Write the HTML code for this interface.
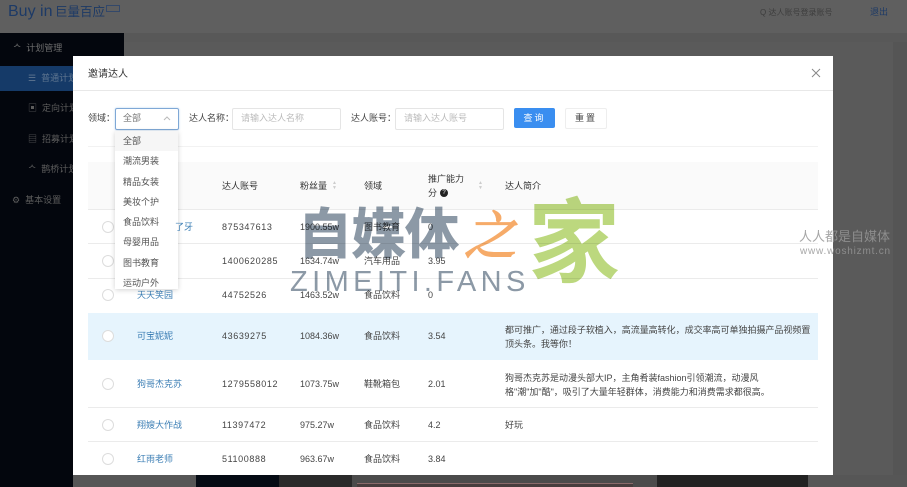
<!DOCTYPE html>
<html lang="zh"><head><meta charset="utf-8"><style>
html,body{margin:0;padding:0}
body{width:907px;height:487px;overflow:hidden;position:relative;background:#585858;font-family:"Liberation Sans","Noto Sans CJK SC",sans-serif;font-size:9px;color:#444}
.a{position:absolute;white-space:nowrap}
.hline{position:absolute;height:1px;background:#ebebeb;left:88px;width:730px}
.radio{position:absolute;left:102px;width:10px;height:10px;border:1px solid #ddd;border-radius:50%;background:#fff}
.link{color:#3d7fb5}
.wm{position:absolute;white-space:nowrap;line-height:1}
.m{mix-blend-mode:multiply}
.d{letter-spacing:.6px}
</style></head><body>
<div class="a" style="left:0;top:0;width:907px;height:33px;background:#5f5f5f"></div>
<div class="a" style="left:8px;top:2px;font-size:16px;line-height:20px;color:#1d3a66">Buy in</div>
<div class="a" style="left:55px;top:2px;font-size:12.5px;line-height:20px;color:#1d3a66">巨量百应</div>
<div class="a" style="left:106px;top:5px;width:12px;height:5px;border:1px solid #33486a"></div>
<div class="a" style="left:760px;top:7px;font-size:8px;line-height:12px;color:#3d3d3d">Q 达人账号登录账号</div>
<div class="a" style="left:870px;top:6px;font-size:9px;line-height:13px;color:#1d3a66">退出</div>
<div class="a" style="left:0;top:33px;width:124px;height:454px;background:#03060d"></div>
<div class="a" style="left:0;top:66px;width:124px;height:25px;background:#153a68"></div>
<div class="a" style="left:13px;top:42px;font-size:9px;line-height:13px;color:#6e6e6e">ᄉ&nbsp;&nbsp;计划管理</div>
<div class="a" style="left:28px;top:72px;font-size:9px;line-height:13px;color:#5f7690">☰&nbsp; 普通计划</div>
<div class="a" style="left:28px;top:102px;font-size:9px;line-height:13px;color:#5c5c5c">▣&nbsp; 定向计划</div>
<div class="a" style="left:28px;top:133px;font-size:9px;line-height:13px;color:#5c5c5c">▤&nbsp; 招募计划</div>
<div class="a" style="left:28px;top:163px;font-size:9px;line-height:13px;color:#5c5c5c">ᄉ&nbsp; 鹊桥计划</div>
<div class="a" style="left:12px;top:194px;font-size:9px;line-height:13px;color:#5c5c5c">⚙&nbsp;&nbsp;基本设置</div>

<div class="a" style="left:124px;top:42px;width:783px;height:445px;background:#5a5a5a"></div>
<div class="a" style="left:893px;top:42px;width:14px;height:445px;background:#555"></div>
<div class="a" style="left:73px;top:475px;width:834px;height:12px;background:#565656"></div>
<div class="a" style="left:196px;top:475px;width:83px;height:12px;background:#050b14"></div>
<div class="a" style="left:279px;top:475px;width:73px;height:12px;background:#2a2a2a"></div>
<div class="a" style="left:352px;top:475px;width:305px;height:12px;background:#4b4b4b"></div>
<div class="a" style="left:357px;top:483px;width:276px;height:4px;background:#473d3d;border-top:1px solid #8a6a6a;box-sizing:border-box"></div>
<div class="a" style="left:657px;top:475px;width:151px;height:12px;background:#222"></div>

<div class="a" style="left:73px;top:56px;width:760px;height:419px;background:#fff;overflow:hidden"></div>
<div class="a" style="left:88px;top:67px;font-size:10px;line-height:15px;color:#333">邀请达人</div>
<svg class="a" style="left:811px;top:68px" width="10" height="10" viewBox="0 0 10 10"><path d="M1 1L9 9M9 1L1 9" stroke="#888" stroke-width="1" fill="none"/></svg>
<div class="a" style="left:73px;top:90px;width:760px;height:1px;background:#e8e8e8"></div>

<div class="a" style="left:88px;top:112px;line-height:13px;color:#444">领域：</div>
<div class="a" style="left:115px;top:108px;width:62px;height:20px;border:1px solid #7fa8d6;border-radius:2px;box-shadow:0 0 2px #bcd5f0"></div>
<div class="a" style="left:123px;top:112px;line-height:13px;color:#777">全部</div>
<svg class="a" style="left:163px;top:116px" width="8" height="5" viewBox="0 0 8 5"><path d="M1 4L4 1L7 4" stroke="#bbb" fill="none"/></svg>
<div class="a" style="left:189px;top:112px;line-height:13px;color:#444">达人名称：</div>
<div class="a" style="left:232px;top:108px;width:107px;height:20px;border:1px solid #e5e5e5;border-radius:2px"></div>
<div class="a" style="left:241px;top:112px;line-height:13px;color:#bbb">请输入达人名称</div>
<div class="a" style="left:351px;top:112px;line-height:13px;color:#444">达人账号：</div>
<div class="a" style="left:395px;top:108px;width:107px;height:20px;border:1px solid #e5e5e5;border-radius:2px"></div>
<div class="a" style="left:404px;top:112px;line-height:13px;color:#bbb">请输入达人账号</div>
<div class="a" style="left:514px;top:108px;width:41px;height:20px;background:#3a8ef0;border-radius:2px;color:#fff;text-align:center;line-height:20px;letter-spacing:2px">查询</div>
<div class="a" style="left:565px;top:108px;width:40px;height:19px;border:1px solid #eee;border-radius:2px;color:#444;text-align:center;line-height:19px;letter-spacing:2px">重置</div>
<div class="hline" style="top:146px;background:#f2f2f2"></div>

<div class="a" style="left:88px;top:162px;width:730px;height:47px;background:#fafafa"></div>
<div class="hline" style="top:209px"></div>
<div class="hline" style="top:243px"></div>
<div class="hline" style="top:278px"></div>
<div class="a" style="left:88px;top:313px;width:730px;height:47px;background:#e6f4fd"></div>
<div class="hline" style="top:407px"></div>
<div class="hline" style="top:441px"></div>

<div class="a" style="left:222px;top:180px;line-height:13px;color:#333">达人账号</div>
<div class="a" style="left:300px;top:180px;line-height:13px;color:#333">粉丝量</div>
<div class="a" style="left:332px;top:181px;font-size:5px;line-height:5px;color:#ccc;white-space:pre">▲
▼</div>
<div class="a" style="left:364px;top:180px;line-height:13px;color:#333">领域</div>
<div class="a" style="left:428px;top:172px;line-height:14px;color:#333;white-space:pre">推广能力
分</div>
<div class="a" style="left:440px;top:189px;width:8px;height:8px;border-radius:50%;background:#222;color:#fff;font-size:6px;line-height:8px;text-align:center">?</div>
<div class="a" style="left:478px;top:181px;font-size:5px;line-height:5px;color:#ccc;white-space:pre">▲
▼</div>
<div class="a" style="left:505px;top:180px;line-height:13px;color:#333">达人简介</div>

<div class="radio" style="top:221px"></div>
<div class="a d" style="left:222px;top:221px;line-height:13px">875347613</div>
<div class="a" style="left:300px;top:221px;line-height:13px">1900.55w</div>
<div class="a" style="left:364px;top:221px;line-height:13px">图书教育</div>
<div class="a" style="left:428px;top:221px;line-height:13px">0</div>

<div class="radio" style="top:255px"></div>
<div class="a d" style="left:222px;top:255px;line-height:13px">1400620285</div>
<div class="a" style="left:300px;top:255px;line-height:13px">1634.74w</div>
<div class="a" style="left:364px;top:255px;line-height:13px">汽车用品</div>
<div class="a" style="left:428px;top:255px;line-height:13px">3.95</div>

<div class="radio" style="top:289px"></div>
<div class="a link" style="left:137px;top:289px;line-height:13px">天天笑园</div>
<div class="a d" style="left:222px;top:289px;line-height:13px">44752526</div>
<div class="a" style="left:300px;top:289px;line-height:13px">1463.52w</div>
<div class="a" style="left:364px;top:289px;line-height:13px">食品饮料</div>
<div class="a" style="left:428px;top:289px;line-height:13px">0</div>

<div class="radio" style="top:330px"></div>
<div class="a link" style="left:137px;top:330px;line-height:13px">可宝妮妮</div>
<div class="a d" style="left:222px;top:330px;line-height:13px">43639275</div>
<div class="a" style="left:300px;top:330px;line-height:13px">1084.36w</div>
<div class="a" style="left:364px;top:330px;line-height:13px">食品饮料</div>
<div class="a" style="left:428px;top:330px;line-height:13px">3.54</div>
<div class="a" style="left:505px;top:323px;line-height:14px;white-space:pre;letter-spacing:-.02px">都可推广，通过段子软植入，高流量高转化，成交率高可单独拍摄产品视频置
顶头条。我等你！</div>

<div class="radio" style="top:378px"></div>
<div class="a link" style="left:137px;top:378px;line-height:13px">狗哥杰克苏</div>
<div class="a d" style="left:222px;top:378px;line-height:13px">1279558012</div>
<div class="a" style="left:300px;top:378px;line-height:13px">1073.75w</div>
<div class="a" style="left:364px;top:378px;line-height:13px">鞋靴箱包</div>
<div class="a" style="left:428px;top:378px;line-height:13px">2.01</div>
<div class="a" style="left:505px;top:371px;line-height:14px;white-space:pre">狗哥杰克苏是动漫头部大IP，主角肴装fashion引领潮流，动漫风
格"潮"加"酷"，吸引了大量年轻群体，消费能力和消费需求都很高。</div>

<div class="radio" style="top:419px"></div>
<div class="a link" style="left:137px;top:419px;line-height:13px">翔嫂大作战</div>
<div class="a d" style="left:222px;top:419px;line-height:13px">11397472</div>
<div class="a" style="left:300px;top:419px;line-height:13px">975.27w</div>
<div class="a" style="left:364px;top:419px;line-height:13px">食品饮料</div>
<div class="a" style="left:428px;top:419px;line-height:13px">4.2</div>
<div class="a" style="left:505px;top:419px;line-height:13px">好玩</div>

<div class="radio" style="top:453px"></div>
<div class="a link" style="left:137px;top:453px;line-height:13px">红雨老师</div>
<div class="a d" style="left:222px;top:453px;line-height:13px">51100888</div>
<div class="a" style="left:300px;top:453px;line-height:13px">963.67w</div>
<div class="a" style="left:364px;top:453px;line-height:13px">食品饮料</div>
<div class="a" style="left:428px;top:453px;line-height:13px">3.84</div>

<div class="a" style="left:115px;top:131px;width:63px;height:158px;background:#fff;box-shadow:0 1px 5px rgba(0,0,0,.18);overflow:hidden">
<div style="height:20px;background:#f6f6f6"></div>
</div>
<div class="a link" style="left:175px;top:221px;line-height:13px;font-size:9px">了牙</div>
<div class="a" style="left:123px;top:131px;line-height:20.3px;white-space:pre;color:#555">全部
潮流男装
精品女装
美妆个护
食品饮料
母婴用品
图书教育
运动户外</div>

<div class="wm m" style="left:298px;top:203px;font-size:54px;font-weight:700;color:#8c99a6;font-family:'Noto Sans CJK SC',sans-serif;letter-spacing:-.5px;-webkit-text-stroke:1px #8c99a6">自媒体</div>
<div class="wm m" style="left:464px;top:206px;font-size:52px;color:#f6ab69;font-family:'Noto Serif CJK SC',serif;font-style:italic;-webkit-text-stroke:1.5px #f6ab69">之</div>
<div class="wm m" style="left:528px;top:190px;font-size:92px;font-weight:700;color:#bcd87e;font-family:'WenQuanYi Zen Hei','Noto Sans CJK SC',sans-serif">家</div>
<div class="wm m" style="left:290px;top:268px;font-size:29px;color:#8c99a6;letter-spacing:4.4px">ZIMEITI.FANS</div>
<div class="wm" style="left:799px;top:230px;font-size:13px;color:rgba(150,150,150,.85)">人人都是自媒体</div>
<div class="wm" style="left:800px;top:247px;font-size:10px;color:rgba(150,150,150,.85);letter-spacing:.8px">www.woshizmt.cn</div>
</body></html>
